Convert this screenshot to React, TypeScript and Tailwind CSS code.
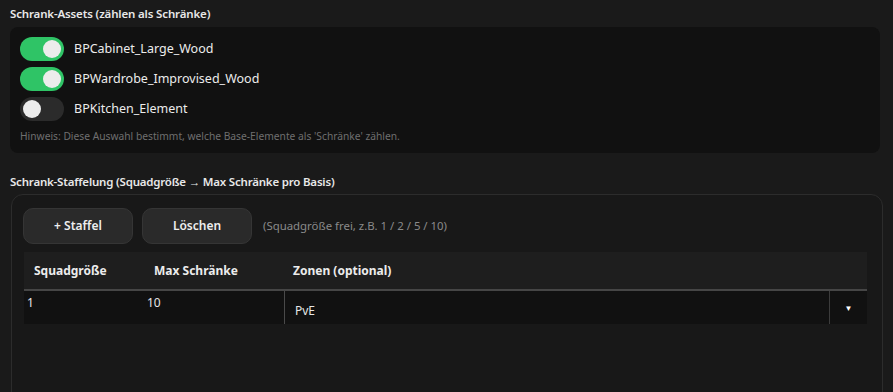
import React from "react";

interface Asset {
  name: string;
  on: boolean;
}

const assets: Asset[] = [
  { name: "BPCabinet_Large_Wood", on: true },
  { name: "BPWardrobe_Improvised_Wood", on: true },
  { name: "BPKitchen_Element", on: false },
];

function Toggle({ on }: { on: boolean }) {
  return (
    <div
      className={`flex h-[24px] w-[44px] shrink-0 items-center rounded-full px-[3px] ${
        on ? "justify-end bg-[#2fc466]" : "justify-start bg-[#2b2b2b]"
      }`}
    >
      <div className="h-[18px] w-[18px] rounded-full bg-[#ececec]" />
    </div>
  );
}

export default function App() {
  return (
    <div
      className="h-[392px] w-[893px] overflow-hidden bg-[#1a1a1a] px-[10px] pt-[6px] text-[#e6e6e6]"
      style={{ fontFamily: '"Noto Sans", "Open Sans", sans-serif' }}
    >
      {/* Schrank-Assets */}
      <h2 className="h-[16px] text-[11.5px] font-semibold leading-[16px] tracking-[-0.15px] text-[#e8e8e8]">
        Schrank-Assets (zählen als Schränke)
      </h2>
      <div className="mt-[5px] w-[870px] rounded-lg bg-[#111111] px-[10px] pt-[10px] pb-[10px]">
        <div className="flex flex-col gap-[6px]">
          {assets.map((a) => (
            <div key={a.name} className="flex h-[24px] items-center gap-[10px]">
              <Toggle on={a.on} />
              <span className="text-[12.5px] text-[#ececec]">{a.name}</span>
            </div>
          ))}
        </div>
        <p className="mt-[8px] text-[10.25px] leading-[14px] text-[#6f6f6f]">
          Hinweis: Diese Auswahl bestimmt, welche Base-Elemente als 'Schränke' zählen.
        </p>
      </div>

      {/* Schrank-Staffelung */}
      <h2 className="mt-[21px] h-[16px] text-[11.5px] font-semibold leading-[16px] tracking-[-0.2px] text-[#e8e8e8]">
        Schrank-Staffelung (Squadgröße → Max Schränke pro Basis)
      </h2>
      <div className="ml-px mt-[4px] h-[220px] w-[872px] rounded-xl border border-[#2c2c2c] bg-[#181818] px-[11px] pt-[13px]">
        <div className="flex items-center gap-[9px]">
          <button className="h-[36px] w-[110px] rounded-[10px] border border-[#353535] bg-[#2a2a2a] text-[12px] font-semibold text-[#eeeeee]">
            + Staffel
          </button>
          <button className="h-[36px] w-[110px] rounded-[10px] border border-[#353535] bg-[#2a2a2a] text-[12px] font-semibold text-[#eeeeee]">
            Löschen
          </button>
          <span className="ml-[2px] text-[11.4px] text-[#8a8a8a]">
            (Squadgröße frei, z.B. 1 / 2 / 5 / 10)
          </span>
        </div>

        <div className="ml-px mt-[8px] w-[843px]">
          <div className="flex h-[39px] items-center border-b-2 border-[#464646] bg-[#1e1e1e] text-[12px] font-bold text-[#ececec]">
            <div className="w-[120px] pl-[10px]">Squadgröße</div>
            <div className="w-[140px] pl-[10px]">Max Schränke</div>
            <div className="flex-1 pl-[9px]">Zonen (optional)</div>
          </div>
          <div className="flex h-[33px] bg-[#111111] text-[12px] text-[#e6e6e6]">
            <div className="w-[120px] pl-[3px] pt-[3px]">1</div>
            <div className="w-[140px] pl-[3px] pt-[3px]">10</div>
            <div className="flex flex-1 border-l border-[#4a4a4a]">
              <div className="flex flex-1 items-end pb-[4px] pl-[10px]">PvE</div>
              <div className="flex w-[38px] items-center justify-center border-l border-[#3c3c3c]">
                <span className="text-[8px] text-white">▼</span>
              </div>
            </div>
          </div>
        </div>
      </div>
    </div>
  );
}
